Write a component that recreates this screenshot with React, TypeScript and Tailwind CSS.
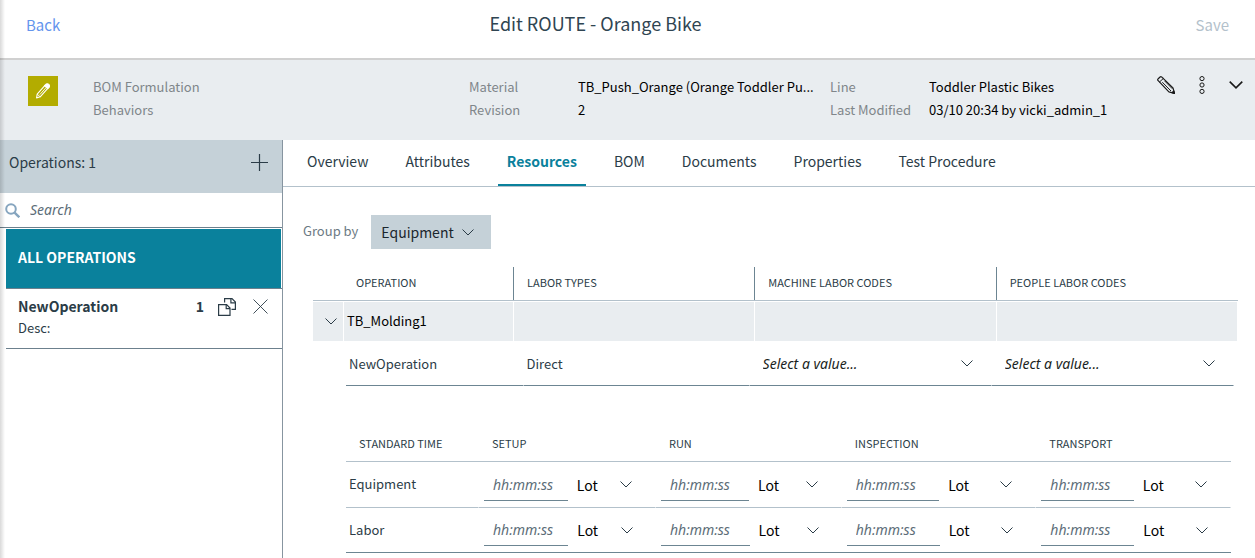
import type { ReactNode } from 'react';

type IconProps = { className?: string };

function ChevronIcon({ className = 'h-[7px] w-3' }: IconProps) {
  return (
    <svg className={`shrink-0 ${className}`} viewBox="0 0 12 7" fill="none" stroke="currentColor" strokeWidth="1" aria-hidden="true">
      <path d="M0.5 0.5 6 6 11.5 0.5" />
    </svg>
  );
}

function BadgePencilIcon() {
  return (
    <svg className="h-4 w-4" viewBox="0 0 16 16" fill="none" stroke="#fff" strokeWidth="1.1" strokeLinejoin="round" aria-hidden="true">
      <path d="M1.6 14.9 2.2 11.2 10.2 2.2 13.2 4.9 5.2 13.8Z" />
      <path d="M4.8 11.6 10.9 4.8" strokeWidth="0.9" />
      <path d="M9.5 2.8 11.2 1.1Q12.6 0.3 13.8 1.4 14.9 2.6 14.3 4L12.7 5.7Z" fill="#fff" />
      <path d="M2.2 11.2 5.2 13.8" strokeWidth="0.9" />
    </svg>
  );
}

function PencilIcon() {
  return (
    <svg className="h-[18px] w-[18px]" viewBox="0 0 18 18" fill="none" stroke="currentColor" strokeWidth="1.2" strokeLinejoin="round" aria-hidden="true">
      <path d="M0.7 4.2Q0.5 3.4 1.2 2.8L3.1 1Q3.8 0.4 4.6 0.9L16 11.9 17.5 17.4 11.9 15.9Z" />
      <path d="M2.5 6 6.5 2.3M5.3 6.2 14 15M7.6 4.9 15.4 12.8" strokeWidth="1" />
      <path d="M15 16.6 17.5 17.4 16.8 15Z" fill="currentColor" />
    </svg>
  );
}

function DotsIcon() {
  return (
    <svg className="h-[18px] w-[6px]" viewBox="0 0 6 18" fill="none" stroke="currentColor" strokeWidth="1" aria-hidden="true">
      <circle cx="3" cy="2.6" r="2.1" />
      <circle cx="3" cy="9" r="2.1" />
      <circle cx="3" cy="15.4" r="2.1" />
    </svg>
  );
}

function PlusIcon() {
  return (
    <svg className="h-[17px] w-[17px]" viewBox="0 0 17 17" stroke="currentColor" strokeWidth="1.2" aria-hidden="true">
      <path d="M8.5 0V17M0 8.5H17" />
    </svg>
  );
}

function SearchIcon() {
  return (
    <svg className="h-[15px] w-[15px]" viewBox="0 0 15 15" fill="none" stroke="#86a5bf" strokeWidth="2" aria-hidden="true">
      <circle cx="6" cy="6" r="4.8" />
      <path d="M9.6 9.6 14.3 14.3" strokeWidth="2.4" />
    </svg>
  );
}

function CopyIcon() {
  return (
    <svg className="h-[18px] w-[18px]" viewBox="0 0 18 18" fill="none" stroke="currentColor" strokeWidth="1.2" aria-hidden="true">
      <path d="M6.6 4.5V0.6H14L17.4 4V11.4H13.5" />
      <path d="M12.9 0.6V4.9H17.4" />
      <path d="M0.6 6.6H8.6L12 10V17.4H0.6Z" />
      <path d="M8.2 6.6V10.6H12" />
    </svg>
  );
}

function CloseIcon() {
  return (
    <svg className="h-[15px] w-[15px]" viewBox="0 0 15 15" stroke="currentColor" strokeWidth="0.9" aria-hidden="true">
      <path d="M0.5 0.5 14.5 14.5M14.5 0.5 0.5 14.5" />
    </svg>
  );
}

const TABS = ['Overview', 'Attributes', 'Resources', 'BOM', 'Documents', 'Properties', 'Test Procedure'];
const TIME_COLUMNS = ['Setup', 'Run', 'Inspection', 'Transport'];
const TIME_ROWS = ['Equipment', 'Labor'];

function TopBar() {
  return (
    <header className="grid h-[60px] grid-cols-[1fr_auto_1fr] items-center border-b-2 border-[#d0d0d0] pr-[26px] pb-3 pl-[26px]">
      <a href="#back" className="justify-self-start pt-1 text-[15px] text-[#6495ed]">Back</a>
      <h1 className="pr-16 text-lg text-[#2f4552]">Edit ROUTE - Orange Bike</h1>
      <button type="button" disabled className="justify-self-end pt-1 text-[15px] text-[#b3c1cb]">Save</button>
    </header>
  );
}

function InfoBand() {
  return (
    <section className="flex h-20 items-start bg-[#e9edf0] pr-3 pl-7 pt-4">
      <span className="flex size-[30px] shrink-0 items-center justify-center bg-[#b3ac00]">
        <BadgePencilIcon />
      </span>
      <dl className="-mt-px grid min-w-0 flex-1 grid-cols-[minmax(0,1fr)_109px_252px_99px_228px] pl-[35px] leading-[23px] text-black">
        <dt className="text-[#80868a]">BOM Formulation</dt>
        <dt className="text-[#80868a]">Material</dt>
        <dd className="truncate">TB_Push_Orange (Orange Toddler Pu...</dd>
        <dt className="text-[#80868a]">Line</dt>
        <dd>Toddler Plastic Bikes</dd>
        <dt className="text-[#80868a]">Behaviors</dt>
        <dt className="text-[#80868a]">Revision</dt>
        <dd>2</dd>
        <dt className="text-[#80868a]">Last Modified</dt>
        <dd>03/10 20:34 by vicki_admin_1</dd>
      </dl>
      <div className="flex items-center gap-6 text-[#1a1a1a]">
        <button type="button" aria-label="Edit"><PencilIcon /></button>
        <button type="button" aria-label="More"><DotsIcon /></button>
        <button type="button" aria-label="Expand details"><ChevronIcon className="h-2 w-[14px] stroke-[1.4]" /></button>
      </div>
    </section>
  );
}

function Sidebar() {
  return (
    <aside className="flex w-[283px] shrink-0 flex-col border-r border-[#8795a0]">
      <div className="flex h-[53px] items-center justify-between bg-[#c5d1d8] pr-[14px] pb-2 pl-[9px]">
        <h2 className="pb-[2px] text-sm">Operations: 1</h2>
        <button type="button" aria-label="Add operation"><PlusIcon /></button>
      </div>
      <label className="flex h-[35px] items-center gap-[10px] border-b border-[#6c808d] pl-[5px]">
        <SearchIcon />
        <input
          type="search"
          aria-label="Search"
          placeholder="Search"
          className="min-w-0 flex-1 bg-transparent font-['Noto_Sans',sans-serif] text-sm italic outline-none placeholder:text-[#5c6d78]"
        />
      </label>
      <ul className="pl-[6px] pt-px">
        <li className="border-b border-[#6c808d]">
          <button type="button" className="mr-px flex h-[59px] w-[275px] items-center bg-[#0a819c] px-3 pb-1 text-sm font-bold text-white">
            ALL OPERATIONS
          </button>
        </li>
        <li className="flex h-[60px] items-start border-b border-[#6c808d] pr-[14px] pl-3 pt-[7px]">
          <div className="flex-1 leading-[21px]">
            <div className="text-sm/[21px] font-bold">NewOperation</div>
            <div>Desc:</div>
          </div>
          <span className="pr-[14px] text-sm/[21px] font-bold">1</span>
          <button type="button" aria-label="Copy operation" className="mr-[17px] flex h-[21px] items-center"><CopyIcon /></button>
          <button type="button" aria-label="Remove operation" className="flex h-[21px] items-center"><CloseIcon /></button>
        </li>
      </ul>
    </aside>
  );
}

function Tabs() {
  return (
    <nav role="tablist" className="flex h-[47px] gap-[19px] border-b border-[#b3c1cb] pl-[15px] text-sm">
      {TABS.map((tab) => (
        <button
          key={tab}
          type="button"
          role="tab"
          aria-selected={tab === 'Resources'}
          className={
            tab === 'Resources'
              ? 'border-b-2 border-[#0a819c] px-[9px] pb-[2px] font-bold text-[#0a819c]'
              : 'border-b-2 border-transparent px-[9px] pb-[2px]'
          }
        >
          {tab}
        </button>
      ))}
    </nav>
  );
}

function CodeSelect({ label }: { label: string }) {
  return (
    <div className="grid items-center">
      <select
        aria-label={label}
        className="col-start-1 row-start-1 w-full appearance-none bg-transparent pl-[13px] font-['Noto_Sans',sans-serif] text-sm italic text-[#1b1f22] outline-none"
      >
        <option>Select a value...</option>
      </select>
      <ChevronIcon className="pointer-events-none col-start-1 row-start-1 mr-[18px] h-[7px] w-3 justify-self-end" />
    </div>
  );
}

function NestedCell({ children }: { children: ReactNode }) {
  return <td className="h-[45px] border-r border-b border-r-white border-b-[#6c8592] p-0 pt-px">{children}</td>;
}

function LaborTable() {
  const head = 'border-b border-b-[#b3c1cb] p-0 text-left align-middle text-[11px] font-normal';
  const label = 'flex h-[33px] items-center pb-[3px]';
  const band = 'border-t border-r border-white bg-[#e9edf0] p-0';
  return (
    <table className="w-full table-fixed border-separate border-spacing-0">
      <colgroup>
        <col className="w-[31px]" />
        <col className="w-[170px]" />
        <col />
        <col />
        <col />
      </colgroup>
      <thead>
        <tr className="h-[34px]">
          <th colSpan={2} scope="col" className={head}>
            <div className={`${label} border-r border-[#6c8592] pl-[43px]`}>OPERATION</div>
          </th>
          <th scope="col" className={head}>
            <div className={`${label} border-r border-[#6c8592] pl-[13px]`}>LABOR TYPES</div>
          </th>
          <th scope="col" className={head}>
            <div className={`${label} border-r border-[#6c8592] pl-[13px]`}>MACHINE LABOR CODES</div>
          </th>
          <th scope="col" className={head}>
            <div className={`${label} pl-[13px]`}>PEOPLE LABOR CODES</div>
          </th>
        </tr>
      </thead>
      <tbody>
        <tr className="h-10">
          <td className={band}>
            <button type="button" aria-label="Collapse TB_Molding1" className="flex w-full justify-center pl-[6px]">
              <ChevronIcon />
            </button>
          </td>
          <td className={`${band} pb-[2px] pl-[3px] text-black`}>TB_Molding1</td>
          <td className={band} />
          <td className={band} />
          <td className={band} />
        </tr>
        <tr>
          <td colSpan={5} className="py-0 pr-[4px] pl-[33px]">
            <table className="w-full table-fixed border-separate border-spacing-0">
              <colgroup>
                <col className="w-1/5" />
                <col className="w-[226px]" />
                <col />
                <col />
              </colgroup>
              <tbody>
                <tr>
                  <NestedCell><div className="pl-[3px]">NewOperation</div></NestedCell>
                  <NestedCell><div className="pl-[3px]">Direct</div></NestedCell>
                  <NestedCell><CodeSelect label="Machine labor code" /></NestedCell>
                  <NestedCell><CodeSelect label="People labor code" /></NestedCell>
                </tr>
              </tbody>
            </table>
          </td>
        </tr>
      </tbody>
    </table>
  );
}

function TimeTable() {
  return (
    <table className="w-full table-fixed border-separate border-spacing-0">
      <colgroup>
        <col className="w-[133px]" />
        <col className="w-1/5" />
        <col className="w-[21%]" />
        <col className="w-[22%]" />
        <col className="w-[22%]" />
      </colgroup>
      <thead>
        <tr className="h-[35px] text-left text-[11px]">
          <th scope="col" className="border-b border-[#b3c1cb] p-0 pb-[2px] pl-[13px] font-normal">STANDARD TIME</th>
          {TIME_COLUMNS.map((column) => (
            <th key={column} scope="col" className="border-b border-[#b3c1cb] p-0 pb-[2px] pl-[13px] font-normal uppercase">{column}</th>
          ))}
        </tr>
      </thead>
      <tbody>
        {TIME_ROWS.map((row) => {
          const line =
            row === 'Labor'
              ? 'h-[45px] border-b border-b-[#6c8592]'
              : 'h-[46px] border-b border-r border-r-white border-b-[#b3c1cb]';
          return (
            <tr key={row}>
              <th scope="row" className={`${line} p-0 pb-px pl-[3px] text-left font-normal`}>{row}</th>
              {TIME_COLUMNS.map((column) => (
                <td key={column} className={`${line} p-0 pl-[5px]`}>
                  <div className="flex items-center gap-[9px]">
                    <input
                      type="text"
                      aria-label={`${row} ${column} time`}
                      placeholder="hh:mm:ss"
                      className="h-8 w-[49%] shrink-0 border-b border-[#6c8592] bg-transparent pl-[9px] font-['Noto_Sans',sans-serif] text-sm italic outline-none placeholder:text-[#5c6d78]"
                    />
                    <div className="grid flex-1 items-center">
                      <select
                        aria-label={`${row} ${column} unit`}
                        className="col-start-1 row-start-1 w-full appearance-none bg-transparent text-sm text-black outline-none"
                      >
                        <option>Lot</option>
                      </select>
                      <ChevronIcon className="pointer-events-none col-start-1 row-start-1 mr-[23px] h-[7px] w-3 justify-self-end" />
                    </div>
                  </div>
                </td>
              ))}
            </tr>
          );
        })}
      </tbody>
    </table>
  );
}

export default function App() {
  return (
    <div className="relative flex min-h-screen flex-col bg-white font-['Noto_Sans_CJK_SC','Noto_Sans',sans-serif] text-[13px]/[20px] text-[#2b3c47]">
      <TopBar />
      <InfoBand />
      <div className="flex flex-1">
        <Sidebar />
        <main className="min-w-0 flex-1">
          <Tabs />
          <div className="pt-7 pr-[17px] pl-[30px]">
            <div className="-ml-[10px] flex items-center gap-[13px]">
              <label htmlFor="group-by" className="pb-[2px] text-[#6c7a84]">Group by</label>
              <div className="grid items-center bg-[#c5d1d8]">
                <select
                  id="group-by"
                  className="col-start-1 row-start-1 h-[34px] w-[120px] appearance-none bg-transparent pl-[10px] text-sm text-[#1b262d] outline-none"
                >
                  <option>Equipment</option>
                </select>
                <ChevronIcon className="pointer-events-none col-start-1 row-start-1 mr-[17px] h-[7px] w-3 justify-self-end" />
              </div>
            </div>
            <div className="pt-[18px]">
              <LaborTable />
            </div>
            <div className="pr-[7px] pl-[33px] pt-[41px]">
              <TimeTable />
            </div>
          </div>
        </main>
      </div>
      <div className="pointer-events-none absolute inset-y-0 left-0 w-[5px] bg-linear-to-r from-black/15 to-transparent" />
    </div>
  );
}
